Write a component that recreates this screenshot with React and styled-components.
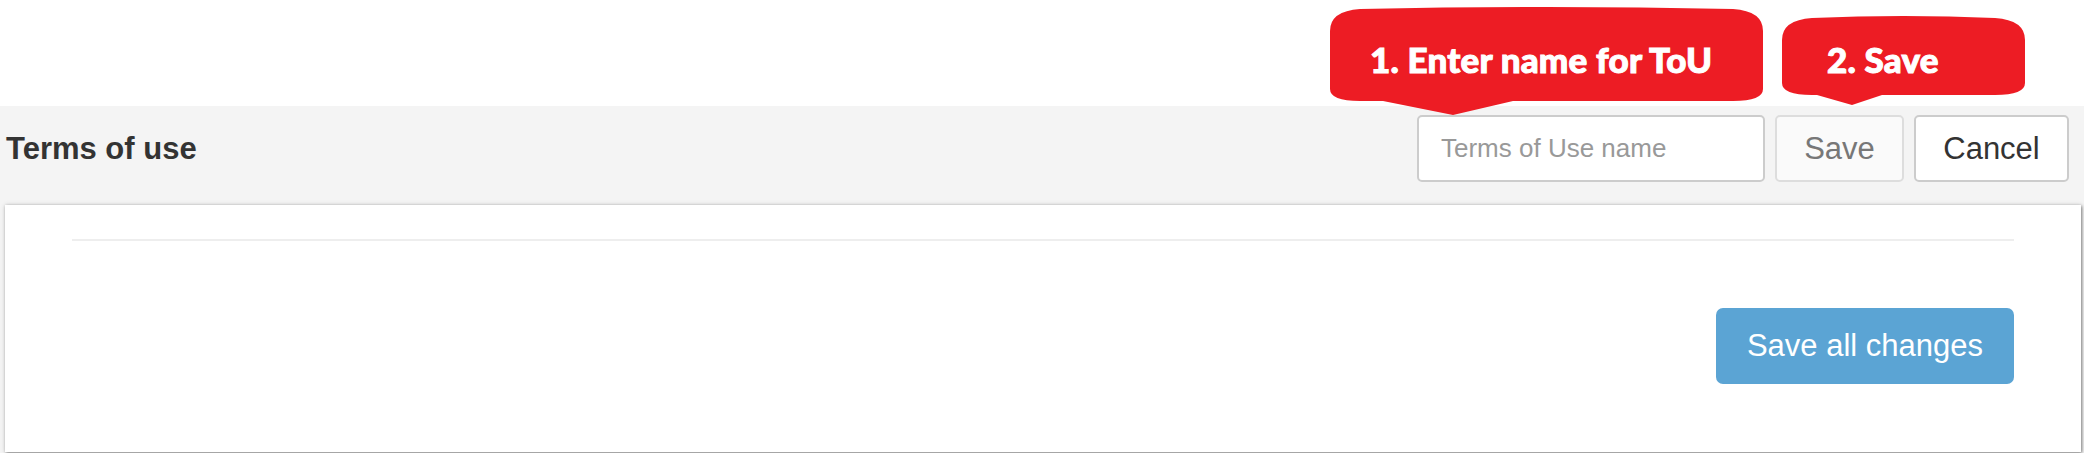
import React from "react";
import styled, { createGlobalStyle } from "styled-components";

const Global = createGlobalStyle`
  html, body {
    margin: 0;
    padding: 0;
    background: #ffffff;
    font-family: "Liberation Sans", Arial, sans-serif;
  }
`;

const Page = styled.div`
  position: relative;
  width: 2084px;
  height: 453px;
  overflow: hidden;
`;

const TopSpace = styled.div`
  height: 106px;
`;

const Band = styled.div`
  background: #f4f4f4;
  height: 347px;
  overflow: hidden;
`;

const Header = styled.div`
  display: flex;
  align-items: center;
  justify-content: space-between;
  padding: 9px 15px 0 6px;
`;

const Title = styled.h1`
  margin: 0;
  font-size: 31px;
  font-weight: bold;
  color: #333333;
`;

const Controls = styled.div`
  display: flex;
  align-items: center;
  gap: 10px;
`;

const NameInput = styled.input`
  box-sizing: border-box;
  width: 348px;
  height: 67px;
  border: 2px solid #cccccc;
  border-radius: 5px;
  padding: 0 22px;
  font-family: "Liberation Sans", Arial, sans-serif;
  font-size: 26px;
  color: #333;
  background: #fff;
  outline: none;
  &::placeholder {
    color: #999999;
  }
`;

const Btn = styled.button`
  box-sizing: border-box;
  width: ${(p) => p.$w}px;
  height: 67px;
  border: 2px solid ${(p) => (p.$muted ? "#dddddd" : "#cccccc")};
  border-radius: 5px;
  background: ${(p) => (p.$muted ? "#fafafa" : "#ffffff")};
  color: ${(p) => (p.$muted ? "#777777" : "#333333")};
  font-family: "Liberation Sans", Arial, sans-serif;
  font-size: 31px;
  padding: 0;
`;

const Card = styled.div`
  margin: 23px 3px 0 5px;
  padding: 34px 67px 68px 67px;
  background: #ffffff;
  box-shadow: 1px 1px 3px rgba(0, 0, 0, 0.45), 0 0 5px rgba(0, 0, 0, 0.12);
`;

const Divider = styled.div`
  height: 2px;
  background: #eeeeee;
`;

const Actions = styled.div`
  display: flex;
  justify-content: flex-end;
  margin-top: 67px;
`;

const PrimaryBtn = styled.button`
  width: 298px;
  height: 76px;
  border: none;
  border-radius: 7px;
  background: #5ba4d4;
  color: #ffffff;
  font-family: "Liberation Sans", Arial, sans-serif;
  font-size: 31px;
  padding: 0;
`;

const CalloutBox = styled.div`
  position: absolute;
  left: ${(p) => p.$x}px;
  top: ${(p) => p.$y}px;
  width: ${(p) => p.$w}px;
  height: ${(p) => p.$h}px;
`;

const CalloutShape = styled.svg`
  position: absolute;
  inset: 0;
  display: block;
`;

const CalloutText = styled.div`
  position: absolute;
  left: ${(p) => p.$tx}px;
  top: ${(p) => p.$ty}px;
  font-family: Lato, "Open Sans", sans-serif;
  font-weight: 900;
  font-size: 35px;
  line-height: 1;
  letter-spacing: 0.2px;
  -webkit-text-stroke: 1px #ffffff;
  color: #ffffff;
  white-space: nowrap;
`;

function Callout({ x, y, w, body, tip, tipY, base, tx, ty, children }) {
  const r = 30;
  const d = [
    `M0,${r - 6}`,
    `Q0,4 ${r},2`,
    `Q${w / 2},-2 ${w - r},2`,
    `Q${w},4 ${w},${r - 6}`,
    `L${w},${body - 12}`,
    `Q${w},${body} ${w - r},${body}`,
    `L${tip + base[1]},${body}`,
    `L${tip},${tipY}`,
    `L${tip - base[0]},${body}`,
    `L${r},${body}`,
    `Q0,${body} 0,${body - 12}`,
    "Z",
  ].join(" ");
  return (
    <CalloutBox $x={x} $y={y} $w={w} $h={tipY}>
      <CalloutShape width={w} height={tipY} viewBox={`0 0 ${w} ${tipY}`}>
        <path d={d} fill="#ed1c24" />
      </CalloutShape>
      <CalloutText $tx={tx} $ty={ty}>{children}</CalloutText>
    </CalloutBox>
  );
}

export default function App() {
  return (
    <Page>
      <Global />
      <TopSpace />
      <Band>
        <Header>
          <Title>Terms of use</Title>
          <Controls>
            <NameInput type="text" placeholder="Terms of Use name" />
            <Btn $w={129} $muted>Save</Btn>
            <Btn $w={155}>Cancel</Btn>
          </Controls>
        </Header>
        <Card>
          <Divider />
          <Actions>
            <PrimaryBtn>Save all changes</PrimaryBtn>
          </Actions>
        </Card>
      </Band>

      <Callout x={1330} y={7} w={433} body={94} tip={123} tipY={108} base={[70, 60]} tx={40} ty={35}>
        1. Enter name for ToU
      </Callout>
      <Callout x={1782} y={16} w={243} body={79} tip={70} tipY={89} base={[35, 30]} tx={45} ty={26}>
        2. Save
      </Callout>
    </Page>
  );
}
